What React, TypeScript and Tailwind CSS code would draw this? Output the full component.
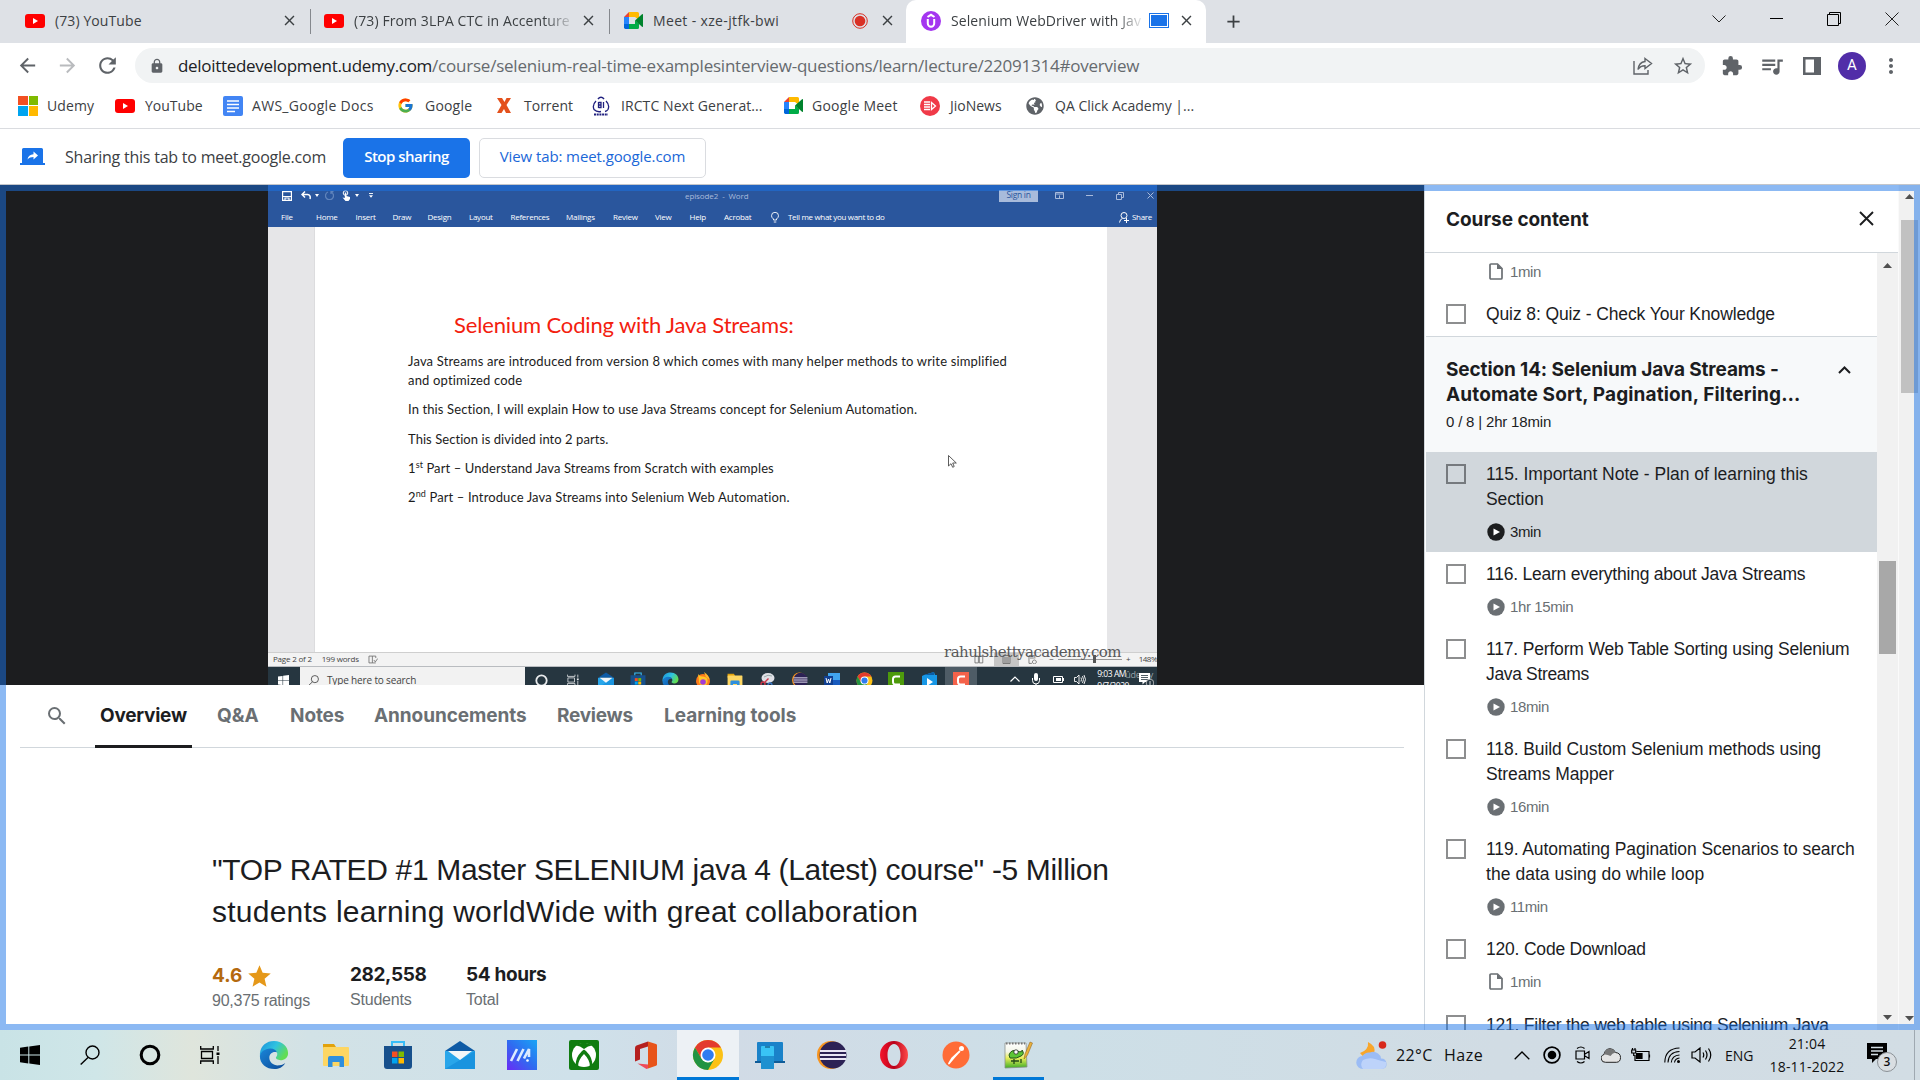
import React from 'react';
import {
  MdArrowBack, MdArrowForward, MdRefresh, MdLock, MdExtension, MdQueueMusic, MdMoreVert,
  MdSearch, MdStarBorder, MdClose, MdAdd, MdStar,
} from 'react-icons/md';
import { FcGoogle } from 'react-icons/fc';
import { FaGlobeAmericas } from 'react-icons/fa';

const UI = 'font-["Open_Sans",sans-serif]';
const UDEMY = 'font-["Liberation_Sans",sans-serif]';
const UDEMY_BOLD = 'font-[Inter,sans-serif] font-bold';

type P = { className?: string };

/* ---------- shared logos ---------- */

const YouTube = ({ className = '' }: P) => (
  <svg className={`h-[14px] w-5 shrink-0 ${className}`} viewBox="0 0 20 14">
    <rect width="20" height="14" rx="3" fill="#f00" />
    <path d="M8 4v6l5-3z" fill="#fff" />
  </svg>
);

const Meet = ({ className = '' }: P) => (
  <svg className={`h-[17px] w-[19px] shrink-0 ${className}`} viewBox="0 0 19 17">
    <path d="M0 5 5 0v5z" fill="#ea4335" />
    <path d="M0 5h5v7H0z" fill="#2684fc" />
    <path d="M0 12h5v5H1.4A1.4 1.4 0 0 1 0 15.600z" fill="#0066da" />
    <path d="M5 0h8.500A1.500 1.500 0 0 1 15 1.500V8l-4-3H5z" fill="#ffba00" />
    <path d="M5 12h6V8.500l4 3v4A1.500 1.500 0 0 1 13.500 17H5z" fill="#00ac47" />
    <path d="M11 8.500 18 2.300c.5-.4 1-.2 1 .4v11.600c0 .6-.5.8-1 .4z" fill="#00832d" />
  </svg>
);

const Edge = ({ s }: { s: string }) => (
  <svg className={`${s} shrink-0`} viewBox="0 0 32 32">
    <defs>
      <linearGradient id="edgeTop" x1="0" x2="1" y1="0" y2=".5">
        <stop offset="0" stopColor="#1b8fdc" /><stop offset=".55" stopColor="#2fc3e0" /><stop offset="1" stopColor="#62dd54" />
      </linearGradient>
      <linearGradient id="edgeLow" x1="0" x2="1" y1="0" y2="1">
        <stop offset="0" stopColor="#1a86d9" /><stop offset="1" stopColor="#0c4a97" />
      </linearGradient>
    </defs>
    <path d="M1 14C2 6 8 1 16 1c9 0 15 6 15 13 0 5-4 7.500-8 7.500-3.500 0-5-1.500-5-2.500s1.500-1.500 1.500-4S17 10 12.500 10C7 10 2 13 1 18z" fill="url(#edgeTop)" />
    <path d="M1 17c.5-4 5-8 11-8 4 0 6.500 2 7 4-5-1-8 2-8 6 0 5 5 9 11 8 2.500-.4 4.500-1.500 6-2.500C25.500 29 21 31 16.500 31 8 31 .5 25 1 17z" fill="url(#edgeLow)" />
  </svg>
);

const Chrome = ({ s }: { s: string }) => (
  <svg className={`${s} shrink-0`} viewBox="0 0 32 32">
    <circle cx="16" cy="16" r="15" fill="#fbc116" />
    <path d="M16 16 3 8.500A15 15 0 0 1 29 8.500H16z" fill="#e33b2e" />
    <path d="M9.500 19.700 3 8.500l13 0v7.500z" fill="#e33b2e" />
    <path d="M3 8.500 9.500 19.700 16 23.500 22.500 19.700 16 31A15 15 0 0 1 3 8.500z" fill="#229342" />
    <circle cx="16" cy="16" r="7.500" fill="#fff" />
    <circle cx="16" cy="16" r="5.800" fill="#2f7cf0" />
  </svg>
);

const Folder = ({ s }: { s: string }) => (
  <svg className={`${s} shrink-0`} viewBox="0 0 28 28">
    <path d="M1 3h11l2 3v4H1z" fill="#e2a20c" />
    <rect x="1" y="6" width="26" height="19" rx="1" fill="#fdd663" />
    <path d="M6 26V17q0-2 2-2h12q2 0 2 2v9h-4.500v-5h-7v5z" fill="#2f8fdd" />
  </svg>
);

const Store = ({ s }: { s: string }) => (
  <svg className={`${s} shrink-0`} viewBox="0 0 30 30">
    <path d="M9 7V2h12v5" fill="none" stroke="#38bdf8" strokeWidth="2" />
    <path d="M1 6h28v20q0 3-3 3H4q-3 0-3-3z" fill="#17508c" />
    <path d="M9 11.500h5.500V17H9z" fill="#f25022" /><path d="M15.500 11.500H21V17h-5.500z" fill="#7fba00" />
    <path d="M9 18h5.500v5.500H9z" fill="#00a4ef" /><path d="M15.500 18H21v5.500h-5.500z" fill="#ffb900" />
  </svg>
);

const Mail = ({ s }: { s: string }) => (
  <svg className={`${s} shrink-0`} viewBox="0 0 30 28">
    <path d="M0 10 15 0l15 10z" fill="#0f5ba5" />
    <path d="M0 10h30v18H0z" fill="#29a6ea" />
    <path d="M0 28 30 10v18z" fill="#1690dc" opacity=".8" />
    <path d="M3 10h24L15 19z" fill="#f3f6f8" />
  </svg>
);

const Eclipse = ({ s }: { s: string }) => (
  <svg className={`${s} shrink-0`} viewBox="0 0 30 28">
    <circle cx="14" cy="14" r="14" fill="#f7941e" />
    <circle cx="16" cy="14" r="13.500" fill="#2c2255" />
    <path d="M3 10h26M3 14h26M3 18h26" stroke="#e9e6f5" strokeWidth="1.800" />
  </svg>
);

const Cortana = ({ s, c }: { s: string; c: string }) => (
  <svg className={`${s} shrink-0`} viewBox="0 0 20 20">
    <circle cx="10" cy="10" r="8" fill="none" stroke={c} strokeWidth="2.800" />
  </svg>
);

const TaskView = ({ s, c }: { s: string; c: string }) => (
  <svg className={`${s} shrink-0`} viewBox="0 0 20 20" fill="none" stroke={c} strokeWidth="1.300">
    <path d="M.7 1v3h12.600V1M.7 19v-3h12.600v3M1.500 6.500h11v7h-11zM18 1v5M18 11v8" />
    <path d="M16.500 7.500h3v2.500h-3z" fill={c} stroke="none" />
  </svg>
);

const WinLogo = ({ s, c }: { s: string; c: string }) => (
  <svg className={`${s} shrink-0`} viewBox="0 0 20 20" fill={c}>
    <path d="M0 2.800 8.300 1.600v7.900H0zM9.300 1.500 20 0v9.500H9.300zM0 10.500h8.300v7.900L0 17.200zM9.300 10.500H20V20L9.300 18.500z" />
  </svg>
);

const Glass = ({ s, c }: { s: string; c: string }) => (
  <svg className={`${s} shrink-0`} viewBox="0 0 20 20" fill="none" stroke={c} strokeWidth="1.400">
    <circle cx="12.500" cy="7.500" r="6.500" /><path d="M8 12.500.7 19.500" />
  </svg>
);

/* ---------- browser chrome ---------- */

const CloseX = () => <MdClose className="size-[17px] shrink-0 text-[#3c4043]" />;

function TabStrip() {
  return (
    <div className={`flex h-[43px] bg-[#dee1e6] text-[14px] text-[#3c4043] ${UI}`}>
      <div className="flex w-[310px] items-center pb-[2px] pl-[25px]">
        <YouTube />
        <span className="ml-[10px] w-[226px] whitespace-nowrap tracking-[0.1px]">(73) YouTube</span>
        <CloseX />
      </div>
      <div className="mt-[9px] h-[25px] w-px bg-[#85888d]" />
      <div className="flex w-[298px] items-center pb-[2px] pl-[13px]">
        <YouTube />
        <span className="ml-[10px] w-[226px] overflow-hidden whitespace-nowrap tracking-[0.1px] [mask-image:linear-gradient(to_right,black_190px,transparent_222px)]">
          (73) From 3LPA CTC in Accenture
        </span>
        <CloseX />
      </div>
      <div className="mt-[9px] h-[25px] w-px bg-[#85888d]" />
      <div className="flex w-[296px] items-center pb-[2px] pl-[14px]">
        <Meet />
        <span className="ml-[10px] w-[199px] whitespace-nowrap tracking-[0.35px]">Meet - xze-jtfk-bwi</span>
        <svg className="size-4 shrink-0" viewBox="0 0 16 16">
          <circle cx="8" cy="8" r="7.300" fill="none" stroke="#d93025" /><circle cx="8" cy="8" r="5.300" fill="#d93025" />
        </svg>
        <div className="ml-[11px]"><CloseX /></div>
      </div>
      <div className="flex w-[300px] items-center rounded-t-[10px] bg-white pb-[2px] pl-[15px]">
        <svg className="size-5 shrink-0" viewBox="0 0 20 20">
          <circle cx="10" cy="10" r="10" fill="#a435f0" />
          <path d="M6.500 6 10 3.800 13.500 6M6.800 8v4.500a3.200 3.200 0 0 0 6.400 0V8" fill="none" stroke="#fff" strokeWidth="2" />
        </svg>
        <span className="ml-[10px] w-[190px] overflow-hidden whitespace-nowrap tracking-[0.1px] [mask-image:linear-gradient(to_right,black_164px,transparent_194px)]">
          Selenium WebDriver with Jav
        </span>
        <svg className="ml-[8px] h-[15px] w-5 shrink-0" viewBox="0 0 20 15">
          <rect x=".5" y=".5" width="19" height="14" fill="#fff" stroke="#1a73e8" /><rect x="2" y="2" width="16" height="11" fill="#1a73e8" />
        </svg>
        <div className="ml-[9px]"><CloseX /></div>
      </div>
      <div className="flex flex-1 items-center">
        <MdAdd className="ml-[17px] size-[21px] text-[#3c4043]" />
        <svg className="mb-[6px] ml-[468px] h-[8px] w-[14px]" viewBox="0 0 14 8" fill="none" stroke="#222"><path d="m.5.5 6.500 6.500L13.500.5" /></svg>
        <div className="mb-[6px] ml-[44px] h-px w-[13px] bg-black" />
        <svg className="mb-[6px] ml-[44px] size-[14px]" viewBox="0 0 14 14" fill="none" stroke="#000"><path d="M.5 2.500h11v11H.5zM2.500 2.500v-2h11v11h-2" /></svg>
        <svg className="mb-[6px] ml-[44px] size-[14px]" viewBox="0 0 14 14" fill="none" stroke="#222"><path d="m.5.5 13 13M13.500.5l-13 13" /></svg>
      </div>
    </div>
  );
}

function Toolbar() {
  return (
    <div className={`flex h-[45px] items-center bg-white text-[#5f6368] ${UI}`}>
      <MdArrowBack className="ml-[16px] size-[23px]" />
      <MdArrowForward className="ml-[17px] size-[23px] text-[#b9bbbe]" />
      <MdRefresh className="ml-[16px] size-[25px]" />
      <div className="ml-[15px] flex h-[35px] w-[1570px] items-center rounded-full bg-[#f1f3f4]">
        <MdLock className="ml-[14px] size-[16px]" />
        <span className="ml-[13px] whitespace-nowrap text-[17px] tracking-[-0.3px] text-[#202124]">deloittedevelopment.udemy.com</span>
        <span className="whitespace-nowrap text-[17px] tracking-[-0.22px] text-[#666a6e]">
          /course/selenium-real-time-examplesinterview-questions/learn/lecture/22091314#overview
        </span>
        <svg className="ml-auto h-[18px] w-[20px]" viewBox="0 0 20 18" fill="none" stroke="currentColor" strokeWidth="1.400">
          <path d="M1 4v13h14v-4M12 1.500l6.500 5L12 11.500V8.700C8.500 8.700 6.500 10 5 12.500c.5-4 2.500-7.500 7-8z" />
        </svg>
        <MdStarBorder className="mr-[11px] ml-[19px] size-[22px]" />
      </div>
      <MdExtension className="ml-[16px] size-[22px]" />
      <MdQueueMusic className="ml-[16px] size-[26px]" />
      <svg className="ml-[18px] h-[18px] w-[18px]" viewBox="0 0 18 18"><path fill="currentColor" fillRule="evenodd" d="M0 0h18v18H0zM2.500 2.500v13h8.500v-13z" /></svg>
      <div className="ml-[17px] flex size-7 items-center justify-center rounded-full bg-[#512da8] font-[Roboto,sans-serif] text-[15px] text-white">A</div>
      <MdMoreVert className="ml-[13px] size-[24px]" />
    </div>
  );
}

const BM = 'flex items-center shrink-0 whitespace-nowrap';

function Bookmarks() {
  return (
    <div className={`flex h-[41px] items-center border-b border-[#dadce0] bg-white pb-[5px] pl-[18px] text-[14px] text-[#3c4043] ${UI}`}>
      <div className={`${BM} w-[97px] tracking-[0.1px]`}>
        <div className="mr-[9px] grid size-5 grid-cols-2 gap-px">
          <div className="bg-[#f25022]" /><div className="bg-[#7fba00]" /><div className="bg-[#00a4ef]" /><div className="bg-[#ffb900]" />
        </div>
        Udemy
      </div>
      <div className={`${BM} w-[108px]`}><YouTube className="mr-[10px]" />YouTube</div>
      <div className={`${BM} w-[174px] tracking-[0.3px]`}>
        <svg className="mr-[9px] size-5" viewBox="0 0 20 20"><rect width="20" height="20" rx="2" fill="#4285f4" /><path d="M4 5h12M4 8.500h12M4 12h12M4 15.500h8" stroke="#fff" strokeWidth="1.700" /></svg>
        AWS_Google Docs
      </div>
      <div className={`${BM} w-[99px] tracking-[0.2px]`}><FcGoogle className="mr-[11px] size-[17px]" />Google</div>
      <div className={`${BM} w-[96px]`}>
        <svg className="mr-[12px] h-[15px] w-[16px]" viewBox="0 0 16 15"><path d="M1 0h5l2.500 4L10.500 0H15l-4.500 7L15 15h-5l-2-4-2.500 4H1l4.500-8z" fill="#e4511c" /></svg>
        Torrent
      </div>
      <div className={`${BM} w-[192px] tracking-[0.08px]`}>
        <svg className="mr-[11px] h-[20px] w-[18px]" viewBox="0 0 18 20" fill="none" stroke="#20207f" strokeWidth="1.600">
          <path d="M6 3Q9-.5 12 3" /><path d="M4 5Q0 9 2 13.500q3 3 7 2M14 5q4 4 2 8.500-1 1.500-3 2" strokeWidth="1.300" />
          <path d="M6.500 6v6M6.500 6.500h2.500v5H6.500M6.500 9H9M11.500 6v6" strokeWidth="1.300" />
          <path d="M2 18.500h14" strokeWidth="2" strokeDasharray="2 .7" />
        </svg>
        IRCTC Next Generat...
      </div>
      <div className={`${BM} w-[136px] tracking-[0.25px]`}><Meet className="mr-[9px]" />Google Meet</div>
      <div className={`${BM} w-[106px]`}>
        <svg className="mr-[10px] size-5" viewBox="0 0 20 20"><circle cx="10" cy="10" r="10" fill="#f03a48" /><path d="M4 6h6M4 8.500h6M4 11h6M4 13.500h6" stroke="#fff" strokeWidth="1.300" /><path d="m11.500 6.500 4 3.500-4 3.500z" fill="none" stroke="#fff" strokeWidth="1.300" /></svg>
        JioNews
      </div>
      <div className={BM}><FaGlobeAmericas className="mr-[11px] size-[18px] text-[#5f6368]" />QA Click Academy |...</div>
    </div>
  );
}

function SharingBar() {
  return (
    <div className={`flex h-[56px] items-center border-b border-[#c4c6ca] bg-white pl-[20px] ${UI}`}>
      <svg className="h-[17px] w-[25px]" viewBox="0 0 25 17">
        <path d="M2 1.500A1.500 1.500 0 0 1 3.500 0h18A1.500 1.500 0 0 1 23 1.500V15h2v2H0v-2h2z" fill="#1a73e8" />
        <path d="M7.500 11.500c.5-3.500 2.500-5 6-5.300V3.500l4.500 4-4.500 4V9c-2.500 0-4.300.7-6 2.500z" fill="#fff" />
      </svg>
      <span className="ml-[20px] w-[278px] whitespace-nowrap pt-px text-[16px] tracking-[-0.22px] text-[#3c4043]">Sharing this tab to meet.google.com</span>
      <div className="mt-[2px] flex h-10 w-[127px] items-center justify-center rounded-[5px] bg-[#1a73e8] pb-[2px] text-[15px] font-semibold tracking-[-0.5px] text-white">Stop sharing</div>
      <div className="mt-[2px] ml-[9px] flex h-10 w-[227px] items-center justify-center rounded-[5px] border border-[#dadce0] pb-[2px] text-[15px] font-medium tracking-[-0.1px] text-[#1a67d8]">View tab: meet.google.com</div>
    </div>
  );
}

/* ---------- lecture video ---------- */

const wordTabs: [string, string][] = [
  ['File', 'w-[35px]'], ['Home', 'w-[39.5px]'], ['Insert', 'w-[37px]'], ['Draw', 'w-[35px]'], ['Design', 'w-[41.500px]'],
  ['Layout', 'w-[41.500px]'], ['References', 'w-[55.500px]'], ['Mailings', 'w-[47px]'], ['Review', 'w-[42px]'], ['View', 'w-[34.500px]'],
  ['Help', 'w-[34.500px]'], ['Acrobat', 'w-[45px]'],
];

function WordRibbon() {
  return (
    <div className={`h-[42px] bg-[#2a569d] text-[8px] text-white ${UI}`}>
      <div className="flex h-[22px] items-center pb-px">
        <svg className="ml-[14px] size-[10px]" viewBox="0 0 10 10" fill="none" stroke="#fff" strokeWidth="1.200"><path d="M.6.6h8.800v8.800H.6zM.6 5.500h8.800M3 9v-2h4v2" /></svg>
        <svg className="ml-[9px] h-[9px] w-[11px]" viewBox="0 0 11 9" fill="none" stroke="#fff" strokeWidth="1.500"><path d="M4 .5 1 3.500l3 3M1 3.500h5.500Q10 4 9 8" /></svg>
        <svg className="ml-[3px] h-[3px] w-[4px]" viewBox="0 0 4 3"><path d="M0 0h4L2 3z" fill="#fff" /></svg>
        <svg className="ml-[6px] size-[9px]" viewBox="0 0 9 9" fill="none" stroke="#5f83bb" strokeWidth="1.300"><path d="M3 1a4 4 0 1 0 3 0M6 3V.5h2.500" /></svg>
        <svg className="ml-[8px] h-[11px] w-[8px]" viewBox="0 0 8 11"><circle cx="3.500" cy="3" r="2.300" fill="none" stroke="#fff" /><path d="M2.800 2.500h1.500V6L8 7v2L6.500 11h-3L.5 7.500 2.800 8z" fill="#fff" /></svg>
        <svg className="ml-[5px] h-[3px] w-[4px]" viewBox="0 0 4 3"><path d="M0 0h4L2 3z" fill="#fff" /></svg>
        <svg className="ml-[10px] h-[5px] w-[4px]" viewBox="0 0 4 5"><path d="M0 .5h4" stroke="#fff" strokeWidth=".9" /><path d="M0 2.200h4L2 4.700z" fill="#fff" /></svg>
        <span className="ml-[312px] w-[314px] whitespace-nowrap tracking-[-0.1px] text-[#a9bbdc]">episode2 &nbsp;-&nbsp; Word</span>
        <div className="flex h-[12px] w-[39px] items-center justify-center bg-[#a8bbdb] text-[8.500px] tracking-[-0.3px] text-[#2a569d]">Sign in</div>
        <svg className="ml-[17px] h-[7px] w-[9px]" viewBox="0 0 9 7" fill="none" stroke="#a9bbdc"><path d="M.5.5h8v6h-8zM.5 2h8M4.500 6V3.500" /></svg>
        <div className="ml-[22px] h-px w-[7px] bg-[#a9bbdc]" />
        <svg className="ml-[23px] size-[8px]" viewBox="0 0 8 8" fill="none" stroke="#a9bbdc"><path d="M.5 2.500h5v5h-5zM2.500 2.500v-2h5v5h-2" /></svg>
        <svg className="ml-[23px] size-[7px]" viewBox="0 0 7 7" stroke="#a9bbdc"><path d="m.5.5 6 6M6.500.5l-6 6" /></svg>
      </div>
      <div className="flex h-[20px] items-center pl-[13px] tracking-[-0.25px]">
        {wordTabs.map(([t, w]) => <span key={t} className={`${w} shrink-0 whitespace-nowrap`}>{t}</span>)}
        <svg className="ml-[2px] h-[11px] w-[8px] shrink-0" viewBox="0 0 8 11" fill="none" stroke="#fff" strokeWidth=".9"><path d="M2.500 8V7Q.5 5.500.5 3.800a3.500 3.500 0 0 1 7 0Q7.500 5.500 5.500 7v1zM2.800 10h2.500" /></svg>
        <span className="ml-[9px] w-[331px] whitespace-nowrap font-medium tracking-[-0.32px]">Tell me what you want to do</span>
        <svg className="h-[11px] w-[10px] shrink-0" viewBox="0 0 10 11" fill="none" stroke="#fff"><circle cx="5" cy="3.500" r="3" /><path d="M.5 10.500Q1 7 3.500 6.500M5 8.500h5M7.500 6v5" /></svg>
        <span className="ml-[3px] font-medium tracking-[-0.3px]">Share</span>
      </div>
    </div>
  );
}

const SUP = 'relative -top-[5px] align-baseline text-[9px] leading-none';

function WordDocument() {
  return (
    <div className="flex h-[425px] bg-[#e6e6e8]">
      <div className="w-[47px] border-r border-[#dcdcde]" />
      <div className="relative w-[792px] bg-white pt-[83px] pl-[93px] font-[Lato,sans-serif] text-[13px] text-[#1c1c1c]">
        <h1 className="ml-[46px] whitespace-nowrap text-[22px] leading-[30px] tracking-[-0.15px] text-[#f3200e]">Selenium Coding with Java Streams:</h1>
        <p className="mt-[12px] mb-[10px] whitespace-nowrap leading-[19.200px] tracking-[0.165px]">
          Java Streams are introduced from version 8 which comes with many helper methods to write simplified<br />and optimized code
        </p>
        <p className="mb-[10px] whitespace-nowrap leading-[19.200px] tracking-[0.115px]">In this Section, I will explain How to use Java Streams concept for Selenium Automation.</p>
        <p className="mb-[10px] whitespace-nowrap leading-[19.200px] tracking-[0.06px]">This Section is divided into 2 parts.</p>
        <p className="mb-[10px] whitespace-nowrap leading-[19.200px] tracking-[0.1px]">1<sup className={SUP}>st</sup> Part – Understand Java Streams from Scratch with examples</p>
        <p className="whitespace-nowrap leading-[19.200px] tracking-[0.12px]">2<sup className={SUP}>nd</sup> Part – Introduce Java Streams into Selenium Web Automation.</p>
        <svg className="absolute top-[228px] left-[633px] h-[13px] w-[9px]" viewBox="0 0 9 13"><path d="M.5.5v10.500L3 8.700l1.700 3.600 1.500-.8L4.700 8h3.600z" fill="#fff" stroke="#333" strokeWidth=".8" /></svg>
      </div>
    </div>
  );
}

function WordStatus() {
  return (
    <div className={`relative flex h-[14px] items-center border-t border-[#cfcfcf] bg-[#f3f3f3] pb-px pl-[5px] text-[8px] text-[#444] ${UI}`}>
      <span className="w-[50px] whitespace-nowrap tracking-[-0.2px]">Page 2 of 2</span>
      <span className="w-[47px] whitespace-nowrap tracking-[-0.2px]">199 words</span>
      <svg className="h-[9px] w-[11px]" viewBox="0 0 11 9" fill="none" stroke="#666" strokeWidth=".8"><path d="M1 1h3.500v7H1zM4.500 1H8v2M8 8H4.500M6 5l1.500 2L10 3.500" /></svg>
      <svg className="ml-[596px] h-[9px] w-[10px]" viewBox="0 0 10 9" fill="none" stroke="#666" strokeWidth=".8"><path d="M1 1h3.500v7H1zM5.500 1H9v7H5.500z" /></svg>
      <div className="ml-[10px] flex h-[13px] w-[26px] items-center justify-center bg-[#c6c6c6]"><svg className="size-[9px]" viewBox="0 0 9 9" fill="none" stroke="#666" strokeWidth=".8"><path d="M1 .5h7v8H1zM2 3h5M2 5h5M2 7h5" /></svg></div>
      <svg className="ml-[9px] size-[9px]" viewBox="0 0 9 9" fill="none" stroke="#666" strokeWidth=".8"><path d="M1 .5h6v3M1 .5v8h3M2 3h4M6.500 5a2 2 0 1 0 .1 0z" /></svg>
      <span className="ml-[12px]">−</span>
      <div className="ml-[4px] h-px w-[36px] bg-[#999]" /><div className="h-[8px] w-[3px] bg-[#555]" /><div className="h-px w-[27px] bg-[#999]" />
      <span className="ml-[4px]">+</span>
      <span className="ml-[8px] whitespace-nowrap tracking-[-0.5px]">148%</span>
      <span className='absolute top-[-11px] left-[676px] whitespace-nowrap font-["DejaVu_Serif",serif] text-[15px] leading-[20px] tracking-[-0.54px] text-[#58585a]'>rahulshettyacademy.com</span>
    </div>
  );
}

const CamtasiaC = ({ c }: { c: string }) => (
  <svg className="size-4" viewBox="0 0 16 16"><rect width="16" height="16" fill={c} /><path d="M12 4.500H7.500Q5 4.500 5 7v3q0 2.500 2.500 2.500H12" fill="none" stroke="#fff" strokeWidth="2" /></svg>
);

function VideoTaskbar() {
  const apps = [
    <Cortana s="size-[13px]" c="#e8eaec" />,
    <TaskView s="size-[12px]" c="#e8eaec" />,
    <Mail s="size-[16px]" />,
    <Store s="size-[16px]" />,
    <Edge s="size-[17px]" />,
    <svg className="size-4" viewBox="0 0 16 16"><circle cx="8" cy="9" r="7" fill="#ff7a1a" /><path d="M3 2q2 3 5 2.500Q13 5 12.500 9A4 4 0 0 1 4 10Q4 7 3 2z" fill="#ffc629" /><path d="M9 0q5 3 5.500 8L11 5z" fill="#ffb72b" /><circle cx="8" cy="10" r="2.800" fill="#a23bd6" /></svg>,
    <Folder s="size-[16px]" />,
    <svg className="size-4" viewBox="0 0 16 16"><ellipse cx="9" cy="6" rx="6.500" ry="5" fill="#dfe0e6" /><path d="M5 5q4-3 8-1" stroke="#9aa" fill="none" /><circle cx="4" cy="12" r="2" fill="none" stroke="#d0364a" strokeWidth="1.300" /><path d="m5.500 10.500 4-4" stroke="#d0364a" strokeWidth="1.500" /><circle cx="11" cy="13" r="2" fill="none" stroke="#3a76c4" strokeWidth="1.300" /></svg>,
    <Eclipse s="size-[16px]" />,
    <svg className="size-4" viewBox="0 0 16 16"><rect x="4" y="1" width="12" height="14" fill="#41a5ee" /><rect x="4" y="8" width="12" height="7" fill="#185abd" /><rect y="4" width="9" height="9" fill="#103f91" /><path d="m2 6 1.200 5L4.500 7l1.300 4L7 6" fill="none" stroke="#fff" /></svg>,
    <Chrome s="size-[17px]" />,
    <CamtasiaC c="#4d9a0c" />,
    <svg className="size-4" viewBox="0 0 16 16"><path d="M3 3 13 0l1 3H16v13H1V4z" fill="#1797e6" /><path d="M3 3 13 0v3z" fill="#0c5da5" /><path d="m6 6 6 4-6 4z" fill="#fff" /></svg>,
    <CamtasiaC c="#f4624a" />,
  ];
  return (
    <div className={`relative flex h-[19px] overflow-hidden border-t border-[#b9bcc0] bg-[#263640] text-white ${UI}`}>
      <div className="flex h-[26px] w-[32px] shrink-0 items-center pl-[10px]"><WinLogo s="size-[11px]" c="#fff" /></div>
      <div className="flex h-[26px] w-[225px] shrink-0 items-center bg-[#f2f2f2] pl-[8px]">
        <Glass s="size-[11px]" c="#333" />
        <span className="ml-[8px] whitespace-nowrap text-[10px] tracking-[-0.15px] text-[#444]">Type here to search</span>
      </div>
      {apps.map((icon, i) => (
        <div key={i} className={`flex h-[26px] w-[32.300px] shrink-0 items-center justify-center ${i === 13 ? 'bg-[#4e5c66]' : ''}`}>{icon}</div>
      ))}
      <svg className="mt-[9px] ml-[33px] h-[6px] w-[10px] shrink-0" viewBox="0 0 10 6" fill="none" stroke="#fff" strokeWidth="1.200"><path d="m.5 5.500 4.500-4.500 4.500 4.500" /></svg>
      <svg className="mt-[6px] ml-[12px] h-[13px] w-[8px] shrink-0" viewBox="0 0 8 13"><rect x="2" width="4" height="8" rx="2" fill="#fff" /><path d="M.5 5v2.500a3.500 3.500 0 0 0 7 0V5M4 11v2" fill="none" stroke="#fff" /></svg>
      <svg className="mt-[9px] ml-[13px] h-[7px] w-[11px] shrink-0" viewBox="0 0 11 7"><path d="M.5.5h9v6h-9zM10.500 2v3" fill="none" stroke="#fff" /><path d="M3 2h5v3H3z" fill="#fff" /></svg>
      <svg className="mt-[7px] ml-[10px] h-[11px] w-[12px] shrink-0" viewBox="0 0 12 11" fill="none" stroke="#fff" strokeWidth=".9"><path d="M.5 3.500h2L5 1v9L2.500 7.500h-2zM7 3.500q1 2 0 4M8.500 2q2 3.500 0 7M10 1q3 4.500 0 9" /></svg>
      <div className="mt-[1px] ml-[11px] w-[28px] shrink-0 whitespace-nowrap text-[8.500px] leading-[12px] tracking-[-0.45px]">9:03 AM<br />9/7/2020</div>
      <span className="mt-[2px] shrink-0 text-[9px] leading-[12px] tracking-[-0.2px] text-[#98a2a9]">ûdemy</span>
      <svg className="absolute top-[6px] left-[871px] h-[14px] w-[15px]" viewBox="0 0 15 14"><path d="M0 0h11v9H6l-2.500 2.500V9H0z" fill="#fff" /><path d="M2 2.500h7M2 4.500h7M2 6.500h7" stroke="#263640" strokeWidth=".8" /><circle cx="11" cy="10" r="3.800" fill="#263640" stroke="#ccc" strokeWidth=".8" /><path d="M11 8v4" stroke="#fff" strokeWidth=".8" /></svg>
    </div>
  );
}

function Video() {
  return (
    <div className="flex h-[500px] bg-[#1c1d1f]">
      <div className="ml-[268px] flex w-[889px] flex-col overflow-hidden">
        <WordRibbon />
        <WordDocument />
        <WordStatus />
        <VideoTaskbar />
      </div>
    </div>
  );
}

/* ---------- course page ---------- */

function CourseTabs() {
  return (
    <div className={`mx-[20px] flex h-[63px] border-b border-[#d1d7dc] text-[19px] leading-[62px] text-[#6a6f73] ${UDEMY_BOLD}`}>
      <div className="flex w-[75px] shrink-0 items-center pl-[25px]"><MdSearch className="size-[24px]" /></div>
      <div className="-mb-px h-[63px] w-[97px] shrink-0 border-b-3 border-[#1c1d1f] pl-[5px] tracking-[-0.25px] text-[#1c1d1f]">Overview</div>
      <div className="ml-[25px] w-[73px] shrink-0 tracking-[0px]">Q&amp;A</div>
      <div className="w-[84px] shrink-0 tracking-[-0.1px]">Notes</div>
      <div className="w-[183px] shrink-0 tracking-[-0.08px]">Announcements</div>
      <div className="w-[107px] shrink-0 tracking-[-0.25px]">Reviews</div>
      <div className="whitespace-nowrap tracking-[0px]">Learning tools</div>
    </div>
  );
}

function Overview() {
  return (
    <div className={`pt-[101px] pl-[212px] text-[#1c1d1f] ${UDEMY}`}>
      <div className="whitespace-nowrap text-[30px] leading-[42px] tracking-[-0.34px]">"TOP RATED #1 Master SELENIUM java 4 (Latest) course" -5 Million</div>
      <div className="whitespace-nowrap text-[30px] leading-[42px] tracking-[0.24px]">students learning worldWide with great collaboration</div>
      <div className="mt-[29px] flex">
        <div className="w-[138px]">
          <div className={`flex h-[26px] items-center pt-[3px] text-[19px] tracking-[0px] text-[#b4690e] ${UDEMY_BOLD}`}>
            4.6<MdStar className="ml-[4px] size-[27px] text-[#e59819]" />
          </div>
          <div className="text-[16px] leading-[25px] tracking-[-0.25px] text-[#6a6f73]">90,375 ratings</div>
        </div>
        <div className="w-[116px]">
          <div className={`text-[19px] leading-[26px] tracking-[-0.4px] ${UDEMY_BOLD}`}>282,558</div>
          <div className="-mt-px text-[16px] leading-[25px] tracking-[-0.2px] text-[#6a6f73]">Students</div>
        </div>
        <div>
          <div className={`text-[19px] leading-[26px] tracking-[-0.35px] ${UDEMY_BOLD}`}>54 hours</div>
          <div className="-mt-px text-[16px] leading-[25px] tracking-[-0.2px] text-[#6a6f73]">Total</div>
        </div>
      </div>
    </div>
  );
}

const PlayIcon = () => (
  <svg className="mx-px size-[18px]" viewBox="0 0 18 18"><circle cx="9" cy="9" r="8.700" fill="currentColor" /><path d="m6.500 5.500 6.500 3.500-6.500 3.500z" fill="#fff" /></svg>
);
const DocIcon = () => (
  <svg className="mx-[3px] h-[17px] w-[14px]" viewBox="0 0 14 17"><path d="M1 2q0-1 1-1h6.500L13 5.500V15q0 1-1 1H2q-1 0-1-1z" fill="none" stroke="currentColor" strokeWidth="1.700" /><path d="M8 1v5h5z" fill="currentColor" /></svg>
);

type Row = { lines: [string, string][]; kind: 'play' | 'doc' | 'none'; time: string; active?: boolean };

const rows: Row[] = [
  { lines: [['115. Important Note - Plan of learning this', 'tracking-[-0.02px]'], ['Section', 'tracking-[-0.1px]']], kind: 'play', time: '3min', active: true },
  { lines: [['116. Learn everything about Java Streams', 'tracking-[-0.23px]']], kind: 'play', time: '1hr 15min' },
  { lines: [['117. Perform Web Table Sorting using Selenium', 'tracking-[-0.18px]'], ['Java Streams', 'tracking-[-0.35px]']], kind: 'play', time: '18min' },
  { lines: [['118. Build Custom Selenium methods using', 'tracking-[-0.08px]'], ['Streams Mapper', 'tracking-[-0.1px]']], kind: 'play', time: '16min' },
  { lines: [['119. Automating Pagination Scenarios to search', 'tracking-[-0.08px]'], ['the data using do while loop', 'tracking-[0.05px]']], kind: 'play', time: '11min' },
  { lines: [['120. Code Download', 'tracking-[-0.2px]']], kind: 'doc', time: '1min' },
  { lines: [['121. Filter the web table using Selenium Java', 'tracking-[-0.23px]']], kind: 'play', time: '12min' },
];

const Meta = ({ kind, time }: { kind: Row['kind']; time: string }) => (
  <div className="flex h-[21px] items-center text-[15px] tracking-[-0.4px]">
    {kind === 'play' ? <PlayIcon /> : <DocIcon />}
    <span className="ml-[4px] pt-px">{time}</span>
  </div>
);

const Checkbox = () => <div className="size-5 shrink-0 border-2 border-[#1c1d1f]/50" />;

function Sidebar() {
  return (
    <div className={`flex w-[474px] shrink-0 flex-col border-l border-[#d1d7dc] bg-white text-[#1c1d1f] ${UDEMY}`}>
      <div className="flex h-[68px] shrink-0 items-center justify-between border-b border-[#d1d7dc] pr-[24px] pl-[21px]">
        <span className={`pt-[3px] text-[19px] tracking-[-0.05px] ${UDEMY_BOLD}`}>Course content</span>
        <svg className="size-[15px]" viewBox="0 0 15 15" stroke="#1c1d1f" strokeWidth="1.900"><path d="m1 1 13 13M14 1 1 14" /></svg>
      </div>
      <div className="flex min-h-0 flex-1">
        <div className="ml-px w-[451px] overflow-hidden">
          <div className="pt-[8px] pl-[60px] text-[#6a6f73]"><Meta kind="doc" time="1min" /></div>
          <div className="flex h-[54px] pt-[22px] pl-[20px]">
            <Checkbox />
            <span className="-mt-[2px] ml-[20px] whitespace-nowrap text-[17.500px] leading-[25px] tracking-[-0.11px]">Quiz 8: Quiz - Check Your Knowledge</span>
          </div>
          <div className="flex h-[116.200px] justify-between border-t border-[#d1d7dc] bg-[#f7f9fa] pt-[21px] pr-[26px] pl-[20px]">
            <div>
              <div className={`whitespace-nowrap text-[19px] leading-[24.500px] tracking-[-0.12px] ${UDEMY_BOLD}`}>Section 14: Selenium Java Streams -</div>
              <div className={`whitespace-nowrap text-[19px] leading-[24.500px] tracking-[0.13px] ${UDEMY_BOLD}`}>Automate Sort, Pagination, Filtering…</div>
              <div className="pt-[5px] text-[15px] leading-[20px] tracking-[-0.18px]">0 / 8 | 2hr 18min</div>
            </div>
            <svg className="mt-[8px] h-[8px] w-[13px]" viewBox="0 0 13 8" fill="none" stroke="#1c1d1f" strokeWidth="2"><path d="m1 7 5.500-5.500L12 7" /></svg>
          </div>
          {rows.map((r) => (
            <div key={r.lines[0][0]} className={`flex pt-[10px] pl-[20px] ${r.lines.length > 1 ? 'pb-[10px]' : 'pb-[10.300px]'} ${r.active ? 'bg-[#d1d7dc]' : ''}`}>
              <div className="pt-[2px]"><Checkbox /></div>
              <div className="ml-[20px]">
                {r.lines.map(([t, ls]) => (
                  <div key={t} className={`h-[25px] whitespace-nowrap text-[17.500px] leading-[25px] ${ls}`}>{t}</div>
                ))}
                <div className={`mt-[9px] ${r.active ? '' : 'text-[#6a6f73]'}`}><Meta kind={r.kind} time={r.time} /></div>
              </div>
            </div>
          ))}
        </div>
        <div className="flex w-[21px] flex-col items-center bg-[#f1f1f1]">
          <svg className="mt-[10px] h-[5px] w-[9px]" viewBox="0 0 9 5"><path d="M0 5 4.500 0 9 5z" fill="#505050" /></svg>
          <div className="mt-[293px] h-[93px] w-[17px] bg-[#a8a8a8]" />
          <svg className="mt-auto mb-[10px] h-[5px] w-[9px]" viewBox="0 0 9 5"><path d="M0 0 4.500 5 9 0z" fill="#505050" /></svg>
        </div>
      </div>
    </div>
  );
}

function Page() {
  return (
    <div className="relative flex h-[845px] overflow-hidden bg-white">
      <div className="w-[1424px] shrink-0 overflow-hidden">
        <Video />
        <CourseTabs />
        <Overview />
      </div>
      <Sidebar />
      <div className="flex w-[22px] shrink-0 flex-col border-l border-[#fafafa] bg-[#f1f1f1] pl-[2px]">
        <svg className="mt-[9px] ml-[4px] h-[5px] w-[9px]" viewBox="0 0 9 5"><path d="M0 5 4.500 0 9 5z" fill="#505050" /></svg>
        <div className="mt-[21px] h-[173px] w-[17px] bg-[#c1c1c1]" />
        <svg className="mt-auto mb-[9px] ml-[4px] h-[5px] w-[9px]" viewBox="0 0 9 5"><path d="M0 0 4.500 5 9 0z" fill="#505050" /></svg>
      </div>
      <div className="pointer-events-none absolute inset-0 border-6 border-[#1a73e8]/50" />
    </div>
  );
}

/* ---------- Windows taskbar ---------- */

const taskApps: { icon: React.ReactNode; cls?: string; bar?: string }[] = [
  { icon: <Edge s="size-[30px]" /> },
  { icon: <Folder s="size-[28px]" /> },
  { icon: <Store s="size-[30px]" /> },
  { icon: <Mail s="h-[28px] w-[30px]" /> },
  {
    icon: (
      <svg className="size-[30px]" viewBox="0 0 30 30">
        <defs><linearGradient id="asus" x1="0" x2="1" y1="1" y2="0"><stop offset="0" stopColor="#6a2bf5" /><stop offset=".5" stopColor="#2f6cf0" /><stop offset="1" stopColor="#18a5f5" /></linearGradient></defs>
        <path d="M0 0h30v30H0z" fill="url(#asus)" />
        <path d="m4 21 6-12M10.500 21l6-12M17 18.500 22 9v8" fill="none" stroke="#dcebff" strokeWidth="2.600" /><circle cx="20.500" cy="20.500" r="1.300" fill="#fff" />
      </svg>
    ),
  },
  {
    icon: (
      <svg className="size-[30px]" viewBox="0 0 30 30">
        <rect width="30" height="30" rx="2" fill="#107c10" /><circle cx="15" cy="15" r="12" fill="#fff" />
        <path d="M7 5.500q4 0 8 3.500 4-3.500 8-3.500-3.500-3-8-2.800Q10 2.700 7 5.500zM13 11Q6 18 7 25l2 1.500Q9 20 15 14q6 6 6 12.500l2-1.500q1-7-6-14l-2-1.500z" fill="#107c10" />
      </svg>
    ),
  },
  {
    icon: (
      <svg className="h-[28px] w-[24px]" viewBox="0 0 24 28">
        <path d="M14 .5 2.500 4.500Q1 5.200 1 7v13.500l5-2V8l8-2.500z" fill="#b5201f" />
        <path d="M14 .5 22 3q1 .4 1 1.500v19q0 1-1 1.300L14 27.500z" fill="#e8541a" />
        <path d="M3.500 22.500 14 23.500v4L12.500 28z" fill="#ee4b5a" />
      </svg>
    ),
  },
  { icon: <Chrome s="size-[32px]" />, cls: 'bg-[#edf1f5]', bar: 'w-[62px]' },
  {
    icon: (
      <svg className="h-[27px] w-[30px]" viewBox="0 0 30 27">
        <rect x="2" y="0" width="26" height="21" rx="1" fill="#1a82c9" /><path d="M0 19h30v2H0z" fill="#0f5c98" />
        <rect x="6" y="4" width="13" height="23" rx="1" fill="#39c4f5" /><path d="M6 14h13v13H6z" fill="#0f70b8" opacity=".6" /><path d="M10 5h5" stroke="#0b3f66" />
      </svg>
    ),
  },
  { icon: <Eclipse s="h-[28px] w-[30px]" /> },
  {
    icon: (
      <svg className="size-[30px]" viewBox="0 0 30 30">
        <defs><linearGradient id="opera" x1="0" x2="1"><stop offset="0" stopColor="#f5152c" /><stop offset=".5" stopColor="#b8001a" /><stop offset="1" stopColor="#ff4a4a" /></linearGradient></defs>
        <path fillRule="evenodd" d="M15 1a14 14 0 1 0 0 28 14 14 0 0 0 0-28zm0 3c4 0 6.500 5 6.500 11S19 26 15 26 8.500 21 8.500 15 11 4 15 4z" fill="url(#opera)" />
      </svg>
    ),
  },
  {
    icon: (
      <svg className="size-[28px]" viewBox="0 0 28 28">
        <circle cx="14" cy="14" r="13.500" fill="#ff6c37" /><circle cx="19.500" cy="7.500" r="2.500" fill="#fff" />
        <path d="m17.500 10.500-5.500 6-5 6 3-5z" fill="#fff" stroke="#fff" strokeWidth="1.800" strokeLinejoin="round" />
      </svg>
    ),
  },
  {
    icon: (
      <svg className="h-[28px] w-[30px]" viewBox="0 0 30 28">
        <defs><linearGradient id="npp" x1="0" x2="0" y1="0" y2="1"><stop offset="0" stopColor="#fff" /><stop offset=".35" stopColor="#f4f6e8" /><stop offset=".6" stopColor="#e9ee5a" /><stop offset="1" stopColor="#3fae28" /></linearGradient></defs>
        <path d="M2 2h21l1 24-22 1z" fill="url(#npp)" stroke="#8a8f8a" strokeWidth=".8" /><path d="M3 2.500h19" stroke="#777" strokeDasharray="1.500 1.500" strokeWidth="2" />
        <path d="M6 14q2-6 8-4t5-1q3 4-1 6-4 3-11 2z" fill="#5cc536" stroke="#25551b" /><circle cx="13" cy="11" r="2.200" fill="#fff" stroke="#222" strokeWidth=".8" />
        <path d="M8 20h8M11 18v5M18 18v4" stroke="#234a1a" strokeWidth="1.300" /><path d="m21 18 1-5 5-12 2.500 1-5 12z" fill="#eab13c" stroke="#8a5a12" strokeWidth=".5" />
      </svg>
    ),
    bar: 'w-[51px]',
  },
];

function Taskbar() {
  return (
    <div className={`flex h-[50px] bg-[linear-gradient(90deg,#c9e3e6_0%,#cfe6e8_5%,#dfe5dc_10%,#d2e2e6_16%,#cfe1ea_30%,#d1dbe6_38%,#cddfe7_55%,#d1dce4_78%,#d2dde4_100%)] text-[#111] ${UI}`}>
      <div className="flex w-[243px] shrink-0">
        <div className="flex w-[60px] items-center justify-center"><WinLogo s="size-5" c="#000" /></div>
        <div className="flex w-[60px] items-center justify-center"><Glass s="size-5" c="#000" /></div>
        <div className="flex w-[60px] items-center justify-center"><Cortana s="size-[22px]" c="#000" /></div>
        <div className="flex w-[60px] items-center justify-center"><TaskView s="size-5" c="#000" /></div>
      </div>
      {taskApps.map((a, i) => (
        <div key={i} className={`flex w-[62px] shrink-0 flex-col items-center ${a.cls ?? ''}`}>
          <div className="flex flex-1 items-center pt-[3px]">{a.icon}</div>
          <div className={`h-[3px] ${a.bar ? `${a.bar} bg-[#0078d7]` : ''}`} />
        </div>
      ))}
      <div className="flex flex-1 items-center">
        <svg className="ml-[307px] h-[29px] w-[31px] shrink-0" viewBox="0 0 31 29">
          <path d="M12 1q1 8-8 11 4 6 11 3.500Q20 12 18 6q-2-3-6-5z" fill="#f8a62b" />
          <path d="M7 28a6.500 6.500 0 0 1-.5-13Q9 11 14 11.500q4-2 8 1 3 2 3 5 5 0 5.500 5t-5 5.500z" fill="#9bbcf5" /><path d="M7 28a6.500 6.500 0 0 1 0-9q6-3 12-1t11 3q1 7-4.500 7z" fill="#c5d8fb" opacity=".8" />
          <circle cx="26.500" cy="4" r="3.800" fill="#d8291c" />
        </svg>
        <span className="ml-[9px] w-[48px] shrink-0 text-[16px] tracking-[0.4px]">22°C</span>
        <span className="w-[70px] shrink-0 text-[16px] tracking-[0.5px]">Haze</span>
        <svg className="h-[9px] w-[16px] shrink-0" viewBox="0 0 16 9" fill="none" stroke="#000" strokeWidth="1.300"><path d="m.7 8.300 7.300-7.300 7.300 7.300" /></svg>
        <svg className="ml-[13px] size-[18px] shrink-0" viewBox="0 0 18 18"><circle cx="9" cy="9" r="7.900" fill="none" stroke="#000" strokeWidth="1.700" /><circle cx="9" cy="9" r="4.300" /></svg>
        <svg className="ml-[14px] h-[18px] w-[15px] shrink-0" viewBox="0 0 15 18" fill="none" stroke="#000" strokeWidth="1.200"><path d="M1 5h8.500v8H1zM10 8l4-2.500v7L10 10M2 2.500q4-3 7.500 0M2 15.500q4 3 7.500 0" /></svg>
        <svg className="ml-[11px] h-[15px] w-[20px] shrink-0" viewBox="0 0 20 15"><path d="M4.500 14.300A4 4 0 0 1 3 6.500q1-5.500 6-5.800Q13 .7 14.500 4.500q5 .5 5 5t-4 4.800z" fill="#e4e4e4" stroke="#222" /><path d="M3 6.500q1-5.500 6-5.800 4 0 5.500 3.800Q11 5 9.500 8 6 6 3 6.500z" fill="#777" /></svg>
        <svg className="ml-[10px] h-[14px] w-[20px] shrink-0" viewBox="0 0 20 14" fill="none" stroke="#000" strokeWidth="1.200"><path d="M5.500 3.500h12.500v9H4V7M18.500 6.500v3M1.500 0v2M4 0v2M.7 2h4v3h-4zM2.700 5v3" /><path d="M5.500 5.500h5.500v5H5.500z" fill="#000" /></svg>
        <svg className="ml-[13px] h-[16px] w-[17px] shrink-0" viewBox="0 0 17 16" fill="none" stroke="#000" strokeWidth="1.100"><path d="M.8 15.500Q1 1.500 15.500 1M4 15.500Q4.500 5 15.500 4.500M7.300 15.500Q8 8.500 15.500 8M10.500 15.500q.5-4 5-4.500" /><circle cx="14.500" cy="14.500" r="1.500" fill="#000" stroke="none" /></svg>
        <svg className="ml-[10px] h-[16px] w-[22px] shrink-0" viewBox="0 0 22 16" fill="none" stroke="#000" strokeWidth="1.200"><path d="M1 5h3l5-4v14l-5-4H1zM12 5.500q1.500 2.500 0 5M14.500 3.500q3 4.500 0 9M17.500 1.500q4.500 6.500 0 13" /></svg>
        <span className="ml-[12px] w-[29px] shrink-0 text-[14px] tracking-[0px]">ENG</span>
        <div className="ml-[13px] flex w-[80px] shrink-0 flex-col items-center text-[14px] leading-[23px] tracking-[0.2px]"><span>21:04</span><span>18-11-2022</span></div>
        <div className="relative ml-[20px] h-[30px] w-[30px] shrink-0">
          <svg className="mt-[3px] h-[21px] w-[20px]" viewBox="0 0 20 21"><path d="M0 0h20v16H9l-4 4v-4H0z" /><path d="M4 4.500h12M4 8h12M4 11.500h7" stroke="#d2dde4" strokeWidth="1.400" /></svg>
          <div className="absolute top-[12px] left-[10px] flex size-5 items-center justify-center rounded-full border border-[#8b9196] bg-[#d9dee2] text-[12px] font-semibold">3</div>
        </div>
        <div className="ml-auto h-full w-[6px] border-l border-[#9fa9b1]" />
      </div>
    </div>
  );
}

export default function App() {
  return (
    <div className="h-[1080px] w-[1920px] overflow-hidden bg-white">
      <TabStrip />
      <Toolbar />
      <Bookmarks />
      <SharingBar />
      <Page />
      <Taskbar />
    </div>
  );
}
